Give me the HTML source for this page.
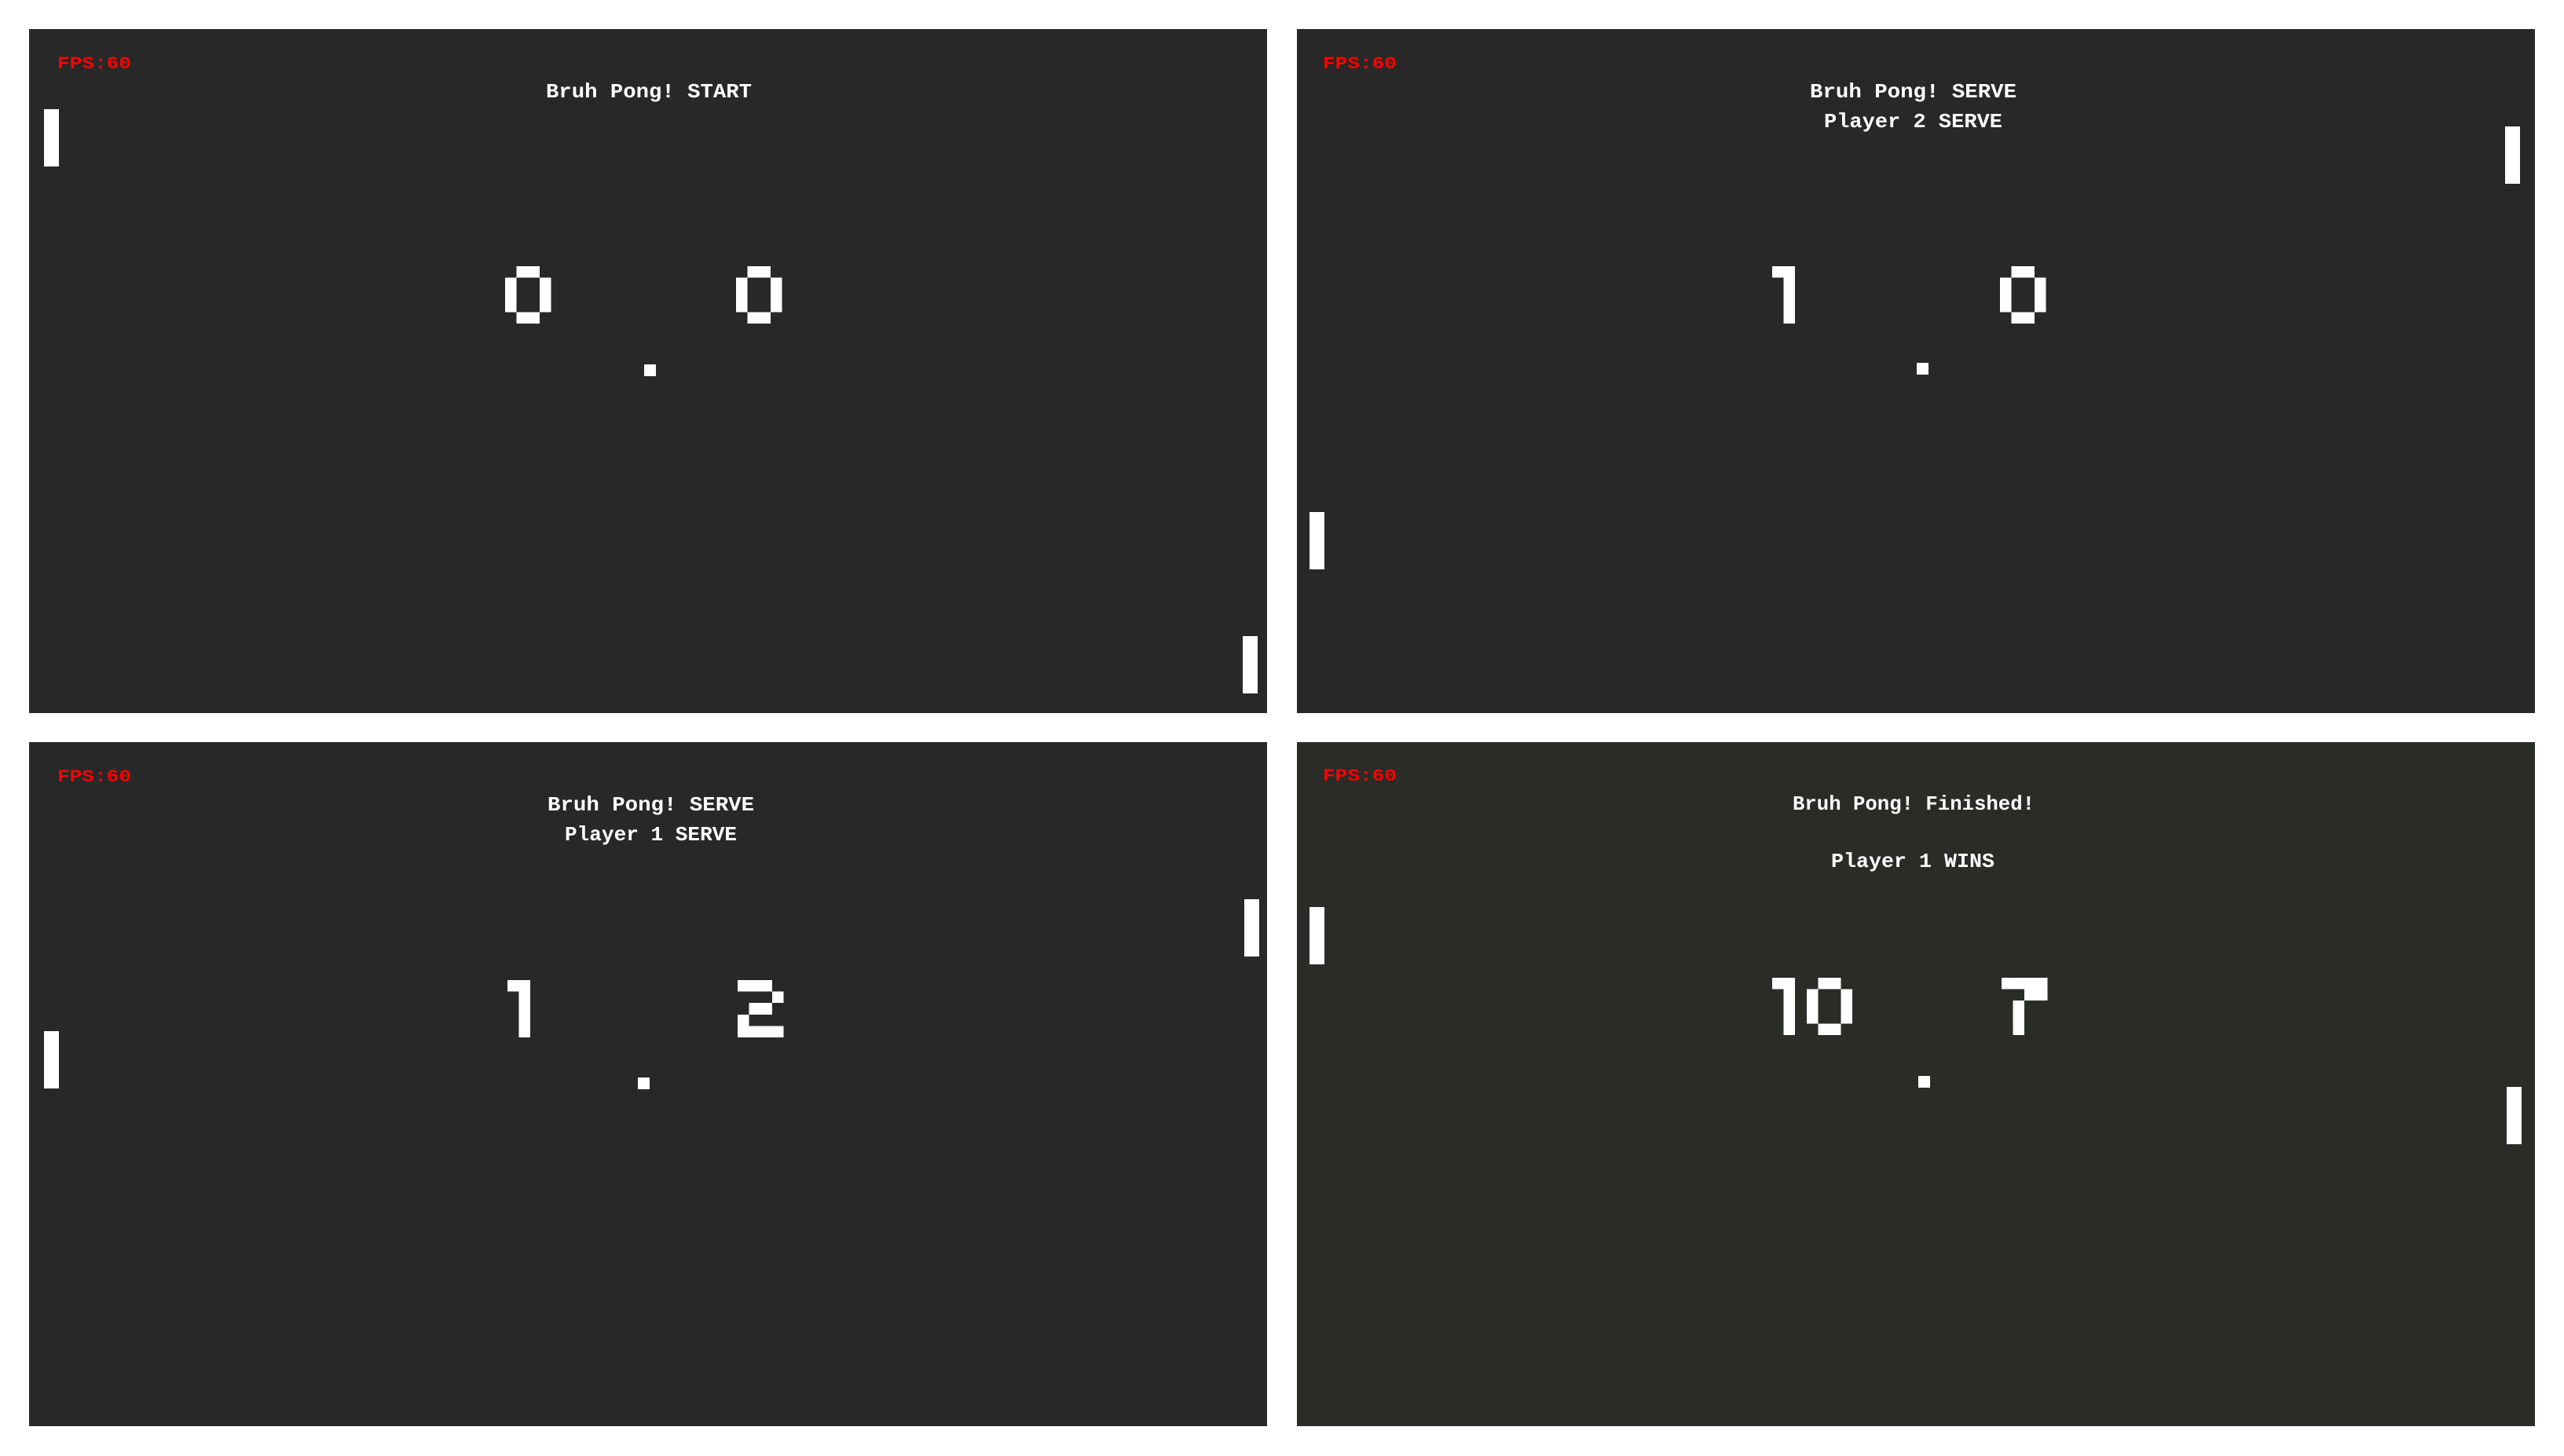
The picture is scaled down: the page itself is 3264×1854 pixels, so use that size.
<!DOCTYPE html>
<html><head><meta charset="utf-8"><style>
html,body{margin:0;padding:0;background:#fff;width:3264px;height:1854px;overflow:hidden}
svg{display:block}
text{font-family:"Liberation Mono",monospace;font-weight:bold}
.t{fill:#fff;font-size:26px}
.f{fill:#ff0000;font-size:22px}
</style></head><body>
<svg width="3264" height="1854" viewBox="0 0 3264 1854" shape-rendering="crispEdges">
<defs>
<g id="d0"><rect x="1" y="0" width="2" height="1"/><rect x="0" y="1" width="1" height="3"/><rect x="3" y="1" width="1" height="3"/><rect x="1" y="4" width="2" height="1"/></g>
<g id="d1"><rect x="0" y="0" width="1" height="1"/><rect x="1" y="0" width="1" height="5"/></g>
<g id="d2"><rect x="0" y="0" width="3" height="1"/><rect x="3" y="1" width="1" height="1"/><rect x="1" y="2" width="2" height="1"/><rect x="0" y="3" width="1" height="1"/><rect x="0" y="4" width="4" height="1"/></g>
<g id="d7"><rect x="0" y="0" width="4" height="1"/><rect x="2" y="1" width="2" height="1"/><rect x="1" y="2" width="1" height="3"/></g>
</defs>
<rect width="3264" height="1854" fill="#fff"/>
<!-- TL -->
<rect x="37" y="37" width="1576" height="871" fill="#282828"/>
<text class="f" x="73" y="87" textLength="94" lengthAdjust="spacingAndGlyphs">FPS:60</text>
<text class="t" x="695" y="124" textLength="262" lengthAdjust="spacingAndGlyphs">Bruh Pong! START</text>
<rect x="56" y="139" width="19" height="73" fill="#fff"/>
<rect x="1582" y="810" width="19" height="73" fill="#fff"/>
<g fill="#fff" transform="translate(643,339) scale(14.6)"><use href="#d0"/></g>
<g fill="#fff" transform="translate(937,339) scale(14.6)"><use href="#d0"/></g>
<rect x="820" y="464" width="15" height="15" fill="#fff"/>
<!-- TR -->
<rect x="1651" y="37" width="1576" height="871" fill="#282828"/>
<text class="f" x="1684" y="87" textLength="94" lengthAdjust="spacingAndGlyphs">FPS:60</text>
<text class="t" x="2304" y="124" textLength="263" lengthAdjust="spacingAndGlyphs">Bruh Pong! SERVE</text>
<text class="t" x="2322" y="162" textLength="227" lengthAdjust="spacingAndGlyphs">Player 2 SERVE</text>
<rect x="3189" y="161" width="19" height="73" fill="#fff"/>
<rect x="1667" y="652" width="19" height="73" fill="#fff"/>
<g fill="#fff" transform="translate(2256,339) scale(14.6)"><use href="#d1"/></g>
<g fill="#fff" transform="translate(2546,339) scale(14.6)"><use href="#d0"/></g>
<rect x="2440" y="462" width="15" height="15" fill="#fff"/>
<!-- BL -->
<rect x="37" y="945" width="1576" height="871" fill="#282828"/>
<text class="f" x="73" y="995" textLength="94" lengthAdjust="spacingAndGlyphs">FPS:60</text>
<text class="t" x="697" y="1032" textLength="263" lengthAdjust="spacingAndGlyphs">Bruh Pong! SERVE</text>
<text class="t" x="719" y="1070" textLength="219" lengthAdjust="spacingAndGlyphs">Player 1 SERVE</text>
<rect x="1584" y="1145" width="19" height="73" fill="#fff"/>
<rect x="56" y="1313" width="19" height="73" fill="#fff"/>
<g fill="#fff" transform="translate(646,1248) scale(14.6)"><use href="#d1"/></g>
<g fill="#fff" transform="translate(939,1248) scale(14.6)"><use href="#d2"/></g>
<rect x="812" y="1372" width="15" height="15" fill="#fff"/>
<!-- BR -->
<rect x="1651" y="945" width="1576" height="871" fill="#292c27"/>
<text class="f" x="1684" y="994" textLength="94" lengthAdjust="spacingAndGlyphs">FPS:60</text>
<text class="t" x="2282" y="1031" textLength="308" lengthAdjust="spacingAndGlyphs">Bruh Pong! Finished!</text>
<text class="t" x="2331" y="1104" textLength="208" lengthAdjust="spacingAndGlyphs">Player 1 WINS</text>
<rect x="1667" y="1155" width="19" height="73" fill="#fff"/>
<rect x="3191" y="1384" width="19" height="73" fill="#fff"/>
<g fill="#fff" transform="translate(2256,1245) scale(14.6)"><use href="#d1"/><use href="#d0" x="3"/></g>
<g fill="#fff" transform="translate(2548,1245) scale(14.6)"><use href="#d7"/></g>
<rect x="2442" y="1370" width="15" height="15" fill="#fff"/>
</svg>
</body></html>
